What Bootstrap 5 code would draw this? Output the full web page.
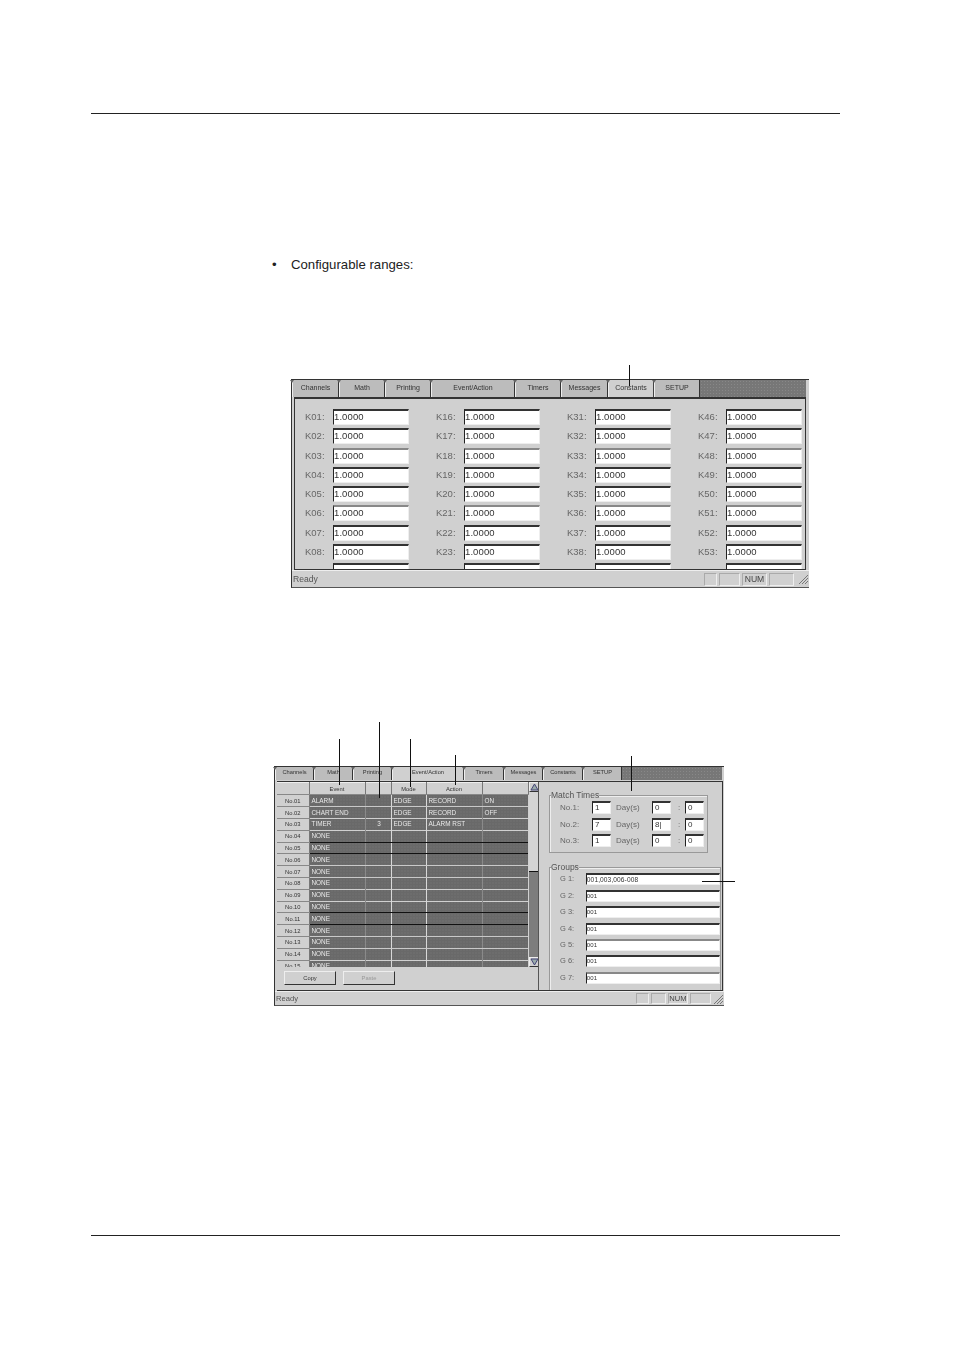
<!DOCTYPE html>
<html lang="en">
<head>
<meta charset="utf-8">
<title>Constants and Event/Action settings</title>
<link href="https://cdn.jsdelivr.net/npm/bootstrap@5.3.0/dist/css/bootstrap.min.css" rel="stylesheet">
<style>
body{background:#fff;margin:0;font-family:"Liberation Sans",Arial,sans-serif;color:#555}
.sheet{width:954px;height:1350px;padding-top:113px;overflow:hidden}
.rule-line{height:1px;width:749px;margin-left:91px;background:#222}
.rule-foot{margin-top:229px}
.bullet-line{margin:143px 0 0 272px;height:16px;line-height:16px;font-size:13.2px;color:#222}
.bullet-line span{display:inline-block;width:19px}
.fig{position:relative;margin-top:106px;margin-left:291px;width:518px}
.fig-two{margin-top:178px;margin-left:274px;width:450px}
.winbox{background:#d0d0d0;border-left:1px solid #333;border-top:1px solid #333;border-bottom:1px solid #555;width:518px;height:209px;font-size:9.5px;filter:blur(.3px)}
.fig-two .winbox{width:450px;height:240px;font-size:8px}
.tabstrip{height:17px;padding-right:3px}
.fig-two .tabstrip{height:14px;padding-right:2px}
.tabstrip-rest{background-color:#777;background-image:radial-gradient(#888 .8px,transparent .9px);background-size:3px 3px}
.tabitem{position:relative;background:#bcbcbc;border-left:1px solid #eee;border-right:1px solid #333;font-size:7px;line-height:16px;text-align:center;color:#333;white-space:nowrap}
.fig-two .tabitem{font-size:5.7px;line-height:11px}
.tabitem::before{content:"";position:absolute;left:-3px;top:0;border:2.5px solid transparent;border-top:3px solid #666;border-bottom:0}
.tabitem.is-on{background:#d0d0d0;border-right-color:#444}
.t47{width:47px}.t46{width:46px}.t84{width:84px}.t39{width:39px}.t72{width:72px}.t40{width:40px}
.panelbox{margin:0 3px 0 2px;border:1px solid #333;border-width:2px 1px 1px 1px;height:173px;overflow:hidden;padding:10px 0 0 10px}
.kgrid{display:grid;grid-template-columns:repeat(4,131px);grid-auto-rows:19.3px}
.kfield span{width:28px;line-height:16px;color:#666}
.inbox.form-control{display:block;min-height:0;width:76px;height:16px;padding:0;font-size:9.5px;line-height:12px;letter-spacing:.1px;color:#333;background:#fff;border:0;border-top:2px solid #333;border-left:1px solid #222;border-right:1px solid #eee;border-bottom:1px solid #eee;border-radius:0;box-shadow:none;white-space:nowrap;overflow:hidden}
.top-soft.form-control{border-top-color:#888}
.statusrow{height:17px;padding:0 0 0 1px;border-top:1px solid #eee;font-size:8.6px;gap:2px}
.fig-two .statusrow{height:14px;font-size:7.6px}
.cell-box{border:1px solid #aaa;border-right-color:#eee;border-bottom-color:#eee;text-align:center;height:13px;line-height:11px;color:#444}
.fig-two .cell-box{height:11px;line-height:9px}
.c13{width:13px}.c15{width:15px}.c20{width:20px}.c21{width:21px}.c25{width:25px}
.gripmark{margin:0 1px 0 2px}
.fig-two .gripmark{margin:0 1px 0 0}
.leaderline{position:absolute;background:#111;width:1px}
.leaderline.horiz{height:1px}
.l-a{left:338px;top:-14px;height:21px}
.two-a{left:65px;top:-27px;height:46px}
.two-b{left:105px;top:-44px;height:76px}
.two-c{left:136px;top:-27px;height:48px}
.two-d{left:181px;top:-11px;height:30px}
.two-e{left:357px;top:-10px;height:35px}
.two-f{left:428px;top:115px;width:33px}
.evpanel{margin:1px 1px 0 2px;border:1px solid #333;border-width:1px 1px 1px 0;height:210px}
.evleft{width:262px;border-right:1px solid #555;height:208px}
.gridwrap{height:185px;overflow:hidden}
.gridtable{width:251px;table-layout:fixed;font-size:6.4px;margin:0}
.gridtable.table>:not(caption)>*>*{padding:0 0 0 2px;height:11.8px;line-height:10px;color:#e8e8e8;background-color:#696969;background-image:radial-gradient(#787878 .7px,transparent .8px);background-size:3px 3px;border-bottom:1px solid transparent;box-shadow:none;vertical-align:middle;white-space:nowrap;overflow:hidden}
.gridtable.table>thead>tr>th,.gridtable.table>tbody>tr>th{background:#d0d0d0;color:#333;text-align:center;font-weight:400;font-size:5.8px;padding:0;border-top:1px solid #eee;border-bottom:1px solid #888;border-right:1px solid #777}
.gridtable.table>thead>tr>th{height:12px}
.gridtable.table>tbody>tr.sep-dark>td{border-bottom-color:#111}
.gridtable.table>tbody>tr.sep-pale>td{border-bottom-color:#c9c9c9}
.gridtable.table>tbody>tr>td.vl-pale{border-right:1px solid #d8d8d8}
.gridtable.table>tbody>tr>td.vl-soft{border-right:1px solid #8a8a8a}
.scrollcol{width:11px;background:#7d7d7d;height:185px}
.scrollbtn{height:10px;background:#d0d0d0;border:1px solid #eee;border-right-color:#333;border-bottom-color:#333;line-height:0}
.scrollthumb{height:80px;background:#d4d4d4;border-bottom:1px solid #111}
.btnrow{padding:4px 0 0 7px;gap:7px}
.flatbtn.btn{width:52px;height:14px;padding:0;font-size:5.8px;line-height:12px;background:#d0d0d0;color:#333;border:1px solid #333;border-top-color:#eee;border-left-color:#eee;border-radius:0}
.flatbtn.btn.is-off{color:#999;opacity:1}
.evright{padding:13px 0 0 10px;position:relative;height:208px;overflow:hidden}
.groupbox{position:relative;border:1px solid #999;box-shadow:inset 1px 1px 0 #eee}
.group-match{width:159px;height:58px;padding:5px 0 0 10px}
.group-list{width:172px;height:130px;margin-top:14px;padding:5px 0 0 10px;border-bottom:0}
.boxtitle{position:absolute;left:1px;top:-6px;background:#d0d0d0;font-size:8.5px;line-height:10px;color:#555}
.matchrow{height:13px;margin-bottom:3.5px;font-size:8px;line-height:13px;color:#666}
.m-label{width:32px}.m-day{width:41px;padding-left:5px}.m-colon{width:14px;text-align:center;padding-left:2px}
.inbox.form-control.tiny{width:19px;height:13px;font-size:8px;line-height:10px;padding-left:2px}
.grouprow{height:12px;margin-bottom:4.4px;font-size:7.5px;line-height:12px;color:#666}
.g-label{width:26px}
.inbox.form-control.wide{width:135px;height:12px;font-size:6px;line-height:9px}
.inbox.form-control.wide.first-one{font-size:6.6px}
</style>
</head>
<body>
<div class="sheet">
  <div class="rule-line"></div>
  <div class="bullet-line"><span>•</span>Configurable ranges:</div>

  <div class="fig">
    <div class="winbox d-flex flex-column">
      <div class="tabstrip d-flex">
        <div class="tabitem t47">Channels</div><div class="tabitem t46">Math</div><div class="tabitem t46">Printing</div><div class="tabitem t84">Event/Action</div><div class="tabitem t46">Timers</div><div class="tabitem t47">Messages</div><div class="tabitem is-on t46">Constants</div><div class="tabitem t46">SETUP</div><div class="tabstrip-rest flex-grow-1"></div>
      </div>
      <div class="panelbox">
        <div class="kgrid">
          <div class="kfield d-flex"><span>K01:</span><div class="inbox form-control">1.0000</div></div>
          <div class="kfield d-flex"><span>K16:</span><div class="inbox form-control">1.0000</div></div>
          <div class="kfield d-flex"><span>K31:</span><div class="inbox form-control">1.0000</div></div>
          <div class="kfield d-flex"><span>K46:</span><div class="inbox form-control">1.0000</div></div>
          <div class="kfield d-flex"><span>K02:</span><div class="inbox form-control">1.0000</div></div>
          <div class="kfield d-flex"><span>K17:</span><div class="inbox form-control">1.0000</div></div>
          <div class="kfield d-flex"><span>K32:</span><div class="inbox form-control">1.0000</div></div>
          <div class="kfield d-flex"><span>K47:</span><div class="inbox form-control">1.0000</div></div>
          <div class="kfield d-flex"><span>K03:</span><div class="inbox form-control top-soft">1.0000</div></div>
          <div class="kfield d-flex"><span>K18:</span><div class="inbox form-control top-soft">1.0000</div></div>
          <div class="kfield d-flex"><span>K33:</span><div class="inbox form-control top-soft">1.0000</div></div>
          <div class="kfield d-flex"><span>K48:</span><div class="inbox form-control top-soft">1.0000</div></div>
          <div class="kfield d-flex"><span>K04:</span><div class="inbox form-control">1.0000</div></div>
          <div class="kfield d-flex"><span>K19:</span><div class="inbox form-control">1.0000</div></div>
          <div class="kfield d-flex"><span>K34:</span><div class="inbox form-control">1.0000</div></div>
          <div class="kfield d-flex"><span>K49:</span><div class="inbox form-control">1.0000</div></div>
          <div class="kfield d-flex"><span>K05:</span><div class="inbox form-control">1.0000</div></div>
          <div class="kfield d-flex"><span>K20:</span><div class="inbox form-control">1.0000</div></div>
          <div class="kfield d-flex"><span>K35:</span><div class="inbox form-control">1.0000</div></div>
          <div class="kfield d-flex"><span>K50:</span><div class="inbox form-control">1.0000</div></div>
          <div class="kfield d-flex"><span>K06:</span><div class="inbox form-control top-soft">1.0000</div></div>
          <div class="kfield d-flex"><span>K21:</span><div class="inbox form-control top-soft">1.0000</div></div>
          <div class="kfield d-flex"><span>K36:</span><div class="inbox form-control top-soft">1.0000</div></div>
          <div class="kfield d-flex"><span>K51:</span><div class="inbox form-control top-soft">1.0000</div></div>
          <div class="kfield d-flex"><span>K07:</span><div class="inbox form-control">1.0000</div></div>
          <div class="kfield d-flex"><span>K22:</span><div class="inbox form-control">1.0000</div></div>
          <div class="kfield d-flex"><span>K37:</span><div class="inbox form-control">1.0000</div></div>
          <div class="kfield d-flex"><span>K52:</span><div class="inbox form-control">1.0000</div></div>
          <div class="kfield d-flex"><span>K08:</span><div class="inbox form-control">1.0000</div></div>
          <div class="kfield d-flex"><span>K23:</span><div class="inbox form-control">1.0000</div></div>
          <div class="kfield d-flex"><span>K38:</span><div class="inbox form-control">1.0000</div></div>
          <div class="kfield d-flex"><span>K53:</span><div class="inbox form-control">1.0000</div></div>
          <div class="kfield d-flex"><span></span><div class="inbox form-control"></div></div>
          <div class="kfield d-flex"><span></span><div class="inbox form-control"></div></div>
          <div class="kfield d-flex"><span></span><div class="inbox form-control"></div></div>
          <div class="kfield d-flex"><span></span><div class="inbox form-control"></div></div>
        </div>
      </div>
      <div class="statusrow d-flex align-items-center">
        <span class="me-auto">Ready</span>
        <div class="cell-box c13"></div><div class="cell-box c21"></div><div class="cell-box c25">NUM</div><div class="cell-box c25"></div>
        <svg class="gripmark" width="10" height="10" viewBox="0 0 10 10"><path d="M10 1 1 10M10 4 4 10M10 7 7 10" stroke="#777" fill="none"/></svg>
      </div>
    </div>
    <div class="leaderline l-a"></div>
  </div>

  <div class="fig fig-two">
    <div class="winbox d-flex flex-column">
      <div class="tabstrip d-flex">
        <div class="tabitem t39">Channels</div><div class="tabitem t39">Math</div><div class="tabitem t39">Printing</div><div class="tabitem is-on t72">Event/Action</div><div class="tabitem t40">Timers</div><div class="tabitem t39">Messages</div><div class="tabitem t40">Constants</div><div class="tabitem t39">SETUP</div><div class="tabstrip-rest flex-grow-1"></div>
      </div>
      <div class="evpanel d-flex">
        <div class="evleft d-flex flex-column flex-shrink-0">
          <div class="gridwrap d-flex">
            <table class="table gridtable">
              <colgroup><col style="width:32px"><col style="width:56px"><col style="width:26px"><col style="width:35px"><col style="width:56px"><col style="width:46px"></colgroup>
              <thead><tr><th></th><th>Event</th><th></th><th>Mode</th><th>Action</th><th></th></tr></thead>
              <tbody>
                <tr class="sep-pale"><th>No.01</th><td class="vl-soft">ALARM</td><td class="vl-pale"></td><td class="vl-pale">EDGE</td><td class="vl-soft">RECORD</td><td>ON</td></tr>
                <tr><th>No.02</th><td class="vl-soft">CHART END</td><td class="vl-pale"></td><td class="vl-pale">EDGE</td><td class="vl-soft">RECORD</td><td>OFF</td></tr>
                <tr><th>No.03</th><td class="vl-soft">TIMER</td><td class="vl-pale text-center">3</td><td class="vl-pale">EDGE</td><td class="vl-soft">ALARM RST</td><td></td></tr>
                <tr class="sep-dark"><th>No.04</th><td class="vl-soft">NONE</td><td class="vl-pale"></td><td class="vl-pale"></td><td class="vl-soft"></td><td></td></tr>
                <tr class="sep-dark"><th>No.05</th><td class="vl-soft">NONE</td><td class="vl-pale"></td><td class="vl-pale"></td><td class="vl-soft"></td><td></td></tr>
                <tr class="sep-pale"><th>No.06</th><td class="vl-soft">NONE</td><td class="vl-pale"></td><td class="vl-pale"></td><td class="vl-soft"></td><td></td></tr>
                <tr class="sep-pale"><th>No.07</th><td class="vl-soft">NONE</td><td class="vl-pale"></td><td class="vl-pale"></td><td class="vl-soft"></td><td></td></tr>
                <tr><th>No.08</th><td class="vl-soft">NONE</td><td class="vl-pale"></td><td class="vl-pale"></td><td class="vl-soft"></td><td></td></tr>
                <tr><th>No.09</th><td class="vl-soft">NONE</td><td class="vl-pale"></td><td class="vl-pale"></td><td class="vl-soft"></td><td></td></tr>
                <tr class="sep-dark"><th>No.10</th><td class="vl-soft">NONE</td><td class="vl-pale"></td><td class="vl-pale"></td><td class="vl-soft"></td><td></td></tr>
                <tr class="sep-dark"><th>No.11</th><td class="vl-soft">NONE</td><td class="vl-pale"></td><td class="vl-pale"></td><td class="vl-soft"></td><td></td></tr>
                <tr class="sep-pale"><th>No.12</th><td class="vl-soft">NONE</td><td class="vl-pale"></td><td class="vl-pale"></td><td class="vl-soft"></td><td></td></tr>
                <tr class="sep-pale"><th>No.13</th><td class="vl-soft">NONE</td><td class="vl-pale"></td><td class="vl-pale"></td><td class="vl-soft"></td><td></td></tr>
                <tr><th>No.14</th><td class="vl-soft">NONE</td><td class="vl-pale"></td><td class="vl-pale"></td><td class="vl-soft"></td><td></td></tr>
                <tr><th>No.15</th><td class="vl-soft">NONE</td><td class="vl-pale"></td><td class="vl-pale"></td><td class="vl-soft"></td><td></td></tr>
              </tbody>
            </table>
            <div class="scrollcol d-flex flex-column flex-shrink-0">
              <div class="scrollbtn"><svg width="9" height="8" viewBox="0 0 9 8"><path d="M4.5 1 8 7H1Z" fill="#9aa" stroke="#447"/></svg></div>
              <div class="scrollthumb"></div>
              <div class="flex-grow-1"></div>
              <div class="scrollbtn"><svg width="9" height="8" viewBox="0 0 9 8"><path d="M1 1H8L4.500 7Z" fill="#9aa" stroke="#447"/></svg></div>
            </div>
          </div>
          <div class="btnrow d-flex">
            <button type="button" class="btn flatbtn">Copy</button>
            <button type="button" class="btn flatbtn is-off">Paste</button>
          </div>
        </div>
        <div class="evright flex-grow-1">
          <div class="groupbox group-match">
            <div class="boxtitle">Match Times</div>
            <div class="matchrow d-flex"><span class="m-label">No.1:</span><div class="inbox form-control tiny">1</div><span class="m-day">Day(s)</span><div class="inbox form-control tiny">0</div><span class="m-colon">:</span><div class="inbox form-control tiny">0</div></div>
            <div class="matchrow d-flex"><span class="m-label">No.2:</span><div class="inbox form-control tiny">7</div><span class="m-day">Day(s)</span><div class="inbox form-control tiny">8|</div><span class="m-colon">:</span><div class="inbox form-control tiny">0</div></div>
            <div class="matchrow d-flex"><span class="m-label">No.3:</span><div class="inbox form-control tiny">1</div><span class="m-day">Day(s)</span><div class="inbox form-control tiny">0</div><span class="m-colon">:</span><div class="inbox form-control tiny">0</div></div>
          </div>
          <div class="groupbox group-list">
            <div class="boxtitle">Groups</div>
            <div class="grouprow d-flex"><span class="g-label">G 1:</span><div class="inbox form-control wide first-one">001,003,006-008</div></div>
            <div class="grouprow d-flex"><span class="g-label">G 2:</span><div class="inbox form-control wide">001</div></div>
            <div class="grouprow d-flex"><span class="g-label">G 3:</span><div class="inbox form-control wide">001</div></div>
            <div class="grouprow d-flex"><span class="g-label">G 4:</span><div class="inbox form-control wide">001</div></div>
            <div class="grouprow d-flex"><span class="g-label">G 5:</span><div class="inbox form-control wide top-soft">001</div></div>
            <div class="grouprow d-flex"><span class="g-label">G 6:</span><div class="inbox form-control wide">001</div></div>
            <div class="grouprow d-flex"><span class="g-label">G 7:</span><div class="inbox form-control wide top-soft">001</div></div>
          </div>
        </div>
      </div>
      <div class="statusrow d-flex align-items-center flex-grow-1">
        <span class="me-auto">Ready</span>
        <div class="cell-box c13"></div><div class="cell-box c15"></div><div class="cell-box c20">NUM</div><div class="cell-box c21"></div>
        <svg class="gripmark" width="10" height="10" viewBox="0 0 10 10"><path d="M10 1 1 10M10 4 4 10M10 7 7 10" stroke="#777" fill="none"/></svg>
      </div>
    </div>
    <div class="leaderline two-a"></div>
    <div class="leaderline two-b"></div>
    <div class="leaderline two-c"></div>
    <div class="leaderline two-d"></div>
    <div class="leaderline two-e"></div>
    <div class="leaderline horiz two-f"></div>
  </div>

  <div class="rule-line rule-foot"></div>
</div>
<script src="https://cdn.jsdelivr.net/npm/bootstrap@5.3.0/dist/js/bootstrap.bundle.min.js"></script>
</body>
</html>
